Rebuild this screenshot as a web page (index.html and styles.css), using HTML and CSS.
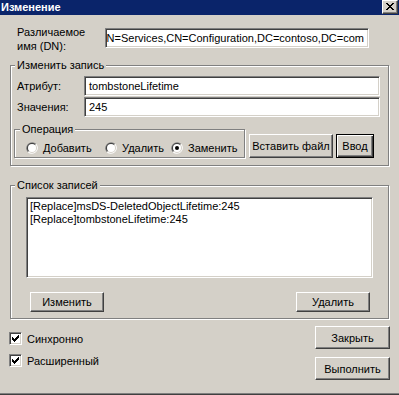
FILE: index.html
```html
<!DOCTYPE html>
<html lang="ru">
<head>
<meta charset="utf-8">
<title>Изменение</title>
<link rel="stylesheet" href="styles.css">
</head>
<body>
<div class="window">
  <div class="titlebar">
    <span class="title-text">Изменение</span>
    <span class="close-btn">
      <svg width="8" height="7" viewBox="0 0 8 7" shape-rendering="crispEdges"><path fill="#000" d="M0 0h2v1h-2z M6 0h2v1h-2z M1 1h2v1h-2z M5 1h2v1h-2z M2 2h4v1h-4z M3 3h2v1h-2z M2 4h4v1h-4z M1 5h2v1h-2z M5 5h2v1h-2z M0 6h2v1h-2z M6 6h2v1h-2z"/></svg>
    </span>
  </div>

  <div class="dn-row">
    <div class="dn-label">Различаемое<br>имя (DN):</div>
    <div class="edit dn-edit"><span class="nowrap">N=Services,CN=Configuration,DC=contoso,DC=com</span></div>
  </div>

  <div class="group group-edit">
    <span class="legend">Изменить запись</span>
    <div class="field-row">
      <span class="field-label">Атрибут:</span>
      <div class="edit field-edit">tombstoneLifetime</div>
    </div>
    <div class="field-row field-row-2">
      <span class="field-label">Значения:</span>
      <div class="edit field-edit">245</div>
    </div>
    <div class="op-row">
      <div class="group op-group">
        <span class="legend legend-op">Операция</span>
        <div class="radios">
          <span class="radio r1"><svg class="radio-icon" width="12" height="12" viewBox="0 0 12 12"><path fill="#808080" d="M10.24 1.76A6 6 0 0 0 1.76 10.24Z"/><path fill="#fff" d="M10.24 1.76A6 6 0 0 1 1.76 10.24Z"/><path fill="#404040" d="M9.54 2.46A5 5 0 0 0 2.46 9.54Z"/><path fill="#d4d0c8" d="M9.54 2.46A5 5 0 0 1 2.46 9.54Z"/><circle cx="6" cy="6" r="4" fill="#fff"/></svg>Добавить</span>
          <span class="radio r2"><svg class="radio-icon" width="12" height="12" viewBox="0 0 12 12"><path fill="#808080" d="M10.24 1.76A6 6 0 0 0 1.76 10.24Z"/><path fill="#fff" d="M10.24 1.76A6 6 0 0 1 1.76 10.24Z"/><path fill="#404040" d="M9.54 2.46A5 5 0 0 0 2.46 9.54Z"/><path fill="#d4d0c8" d="M9.54 2.46A5 5 0 0 1 2.46 9.54Z"/><circle cx="6" cy="6" r="4" fill="#fff"/></svg>Удалить</span>
          <span class="radio r3"><svg class="radio-icon" width="12" height="12" viewBox="0 0 12 12"><path fill="#808080" d="M10.24 1.76A6 6 0 0 0 1.76 10.24Z"/><path fill="#fff" d="M10.24 1.76A6 6 0 0 1 1.76 10.24Z"/><path fill="#404040" d="M9.54 2.46A5 5 0 0 0 2.46 9.54Z"/><path fill="#d4d0c8" d="M9.54 2.46A5 5 0 0 1 2.46 9.54Z"/><circle cx="6" cy="6" r="4" fill="#fff"/><circle cx="6" cy="6" r="2" fill="#000"/></svg>Заменить</span>
        </div>
      </div>
      <span class="btn btn-insert">Вставить файл</span>
      <span class="btn btn-default btn-enter">Ввод</span>
    </div>
  </div>

  <div class="group group-list">
    <span class="legend">Список записей</span>
    <div class="listbox">
      <div class="list-item">[Replace]msDS-DeletedObjectLifetime:245</div>
      <div class="list-item">[Replace]tombstoneLifetime:245</div>
    </div>
    <div class="list-buttons">
      <span class="btn btn-small">Изменить</span>
      <span class="btn btn-small">Удалить</span>
    </div>
  </div>

  <div class="bottom">
    <div class="checks">
      <div class="check-row">
        <span class="checkbox"><svg width="11" height="11" viewBox="0 0 11 11" shape-rendering="crispEdges"><path fill="#000" d="M8 2h1v1h-1z M7 3h2v1h-2z M2 4h1v1h-1z M6 4h3v1h-3z M2 5h2v1h-2z M5 5h3v1h-3z M2 6h5v1h-5z M3 7h3v1h-3z M4 8h1v1h-1z"/></svg></span>
        <span>Синхронно</span>
      </div>
      <div class="check-row check-row-2">
        <span class="checkbox"><svg width="11" height="11" viewBox="0 0 11 11" shape-rendering="crispEdges"><path fill="#000" d="M8 2h1v1h-1z M7 3h2v1h-2z M2 4h1v1h-1z M6 4h3v1h-3z M2 5h2v1h-2z M5 5h3v1h-3z M2 6h5v1h-5z M3 7h3v1h-3z M4 8h1v1h-1z"/></svg></span>
        <span>Расширенный</span>
      </div>
    </div>
    <div class="actions">
      <span class="btn btn-action">Закрыть</span>
      <span class="btn btn-action btn-run">Выполнить</span>
    </div>
  </div>
</div>
</body>
</html>
```
FILE: styles.css
```css
html {
  background: #404040;
}
body {
  margin: 0;
  font: 11px "Liberation Sans", Arial, sans-serif;
  color: #000;
}
.window {
  width: 399px;
  height: 394px;
  box-sizing: border-box;
  background: #d4d0c8;
  border-bottom: 1px solid #808080;
  overflow: hidden;
}
.titlebar {
  height: 15px;
  background: #0a246a;
  display: flex;
  justify-content: space-between;
  align-items: flex-start;
}
.title-text {
  color: #fff;
  font-weight: bold;
  line-height: 15px;
  padding-left: 1px;
}
.close-btn {
  width: 16px;
  height: 14px;
  margin-right: 1px;
  box-sizing: border-box;
  background: #d4d0c8;
  border: 1px solid;
  border-color: #fff #404040 #404040 #fff;
  box-shadow: inset -1px -1px #808080;
  display: flex;
  padding: 2px 0 0 3px;
}
.close-btn svg {
  display: block;
}

/* edits */
.edit {
  height: 20px;
  box-sizing: border-box;
  background: #fff;
  border: 1px solid;
  border-color: #808080 #fff #fff #808080;
  box-shadow: inset 1px 1px #404040, inset -1px -1px #d4d0c8;
  display: flex;
  align-items: center;
  padding: 0 3px;
  white-space: nowrap;
  overflow: hidden;
}

.dn-row {
  display: flex;
  margin-top: 10px;
  padding-left: 17px;
}
.dn-label {
  width: 88px;
  line-height: 14px;
}
.dn-edit {
  width: 264px;
  margin-top: 3px;
  padding: 0 4px 0 1px;
  justify-content: flex-end;
}
.nowrap {
  white-space: nowrap;
  flex-shrink: 0;
}

/* group boxes */
.group {
  position: relative;
  box-sizing: border-box;
  border: 1px solid #808080;
  box-shadow: inset 1px 1px #fff, 1px 1px #fff;
}
.legend {
  position: absolute;
  top: -8px;
  left: 4px;
  padding: 0 2px;
  background: #d4d0c8;
  line-height: 14px;
  white-space: nowrap;
}
.group-edit {
  margin: 12px 0 0 10px;
  width: 379px;
  padding: 10px 0 7px 0;
}
.field-row {
  display: flex;
  align-items: center;
  padding-left: 6px;
}
.field-row-2 {
  margin-top: 1px;
}
.field-label {
  width: 67px;
}
.field-edit {
  width: 296px;
  padding-left: 4px;
}
.op-row {
  display: flex;
  align-items: flex-end;
  margin: 12px 0 0 3px;
}
.op-group {
  width: 231px;
  height: 29px;
  padding: 12px 0 0 11px;
}
.legend-op {
  left: 5px;
}
.radios {
  display: flex;
  align-items: center;
  height: 12px;
}
.radio {
  display: flex;
  align-items: center;
  gap: 5px;
  white-space: nowrap;
}
.radio-icon {
  display: block;
  flex-shrink: 0;
}
.r1 { width: 79px; }
.r2 { width: 66px; }

/* buttons */
.btn {
  box-sizing: border-box;
  display: flex;
  align-items: center;
  justify-content: center;
  background: #d4d0c8;
  border: 1px solid;
  border-color: #fff #404040 #404040 #fff;
  box-shadow: inset -1px -1px #808080;
  white-space: nowrap;
}
.btn-insert {
  width: 84px;
  height: 24px;
  margin-left: 4px;
}
.btn-default {
  border: 1px solid #000;
  box-shadow: inset 1px 1px #fff, inset -1px -1px #404040, inset -2px -2px #808080;
}
.btn-enter {
  width: 38px;
  height: 24px;
  margin-left: 3px;
}

/* list */
.group-list {
  margin: 19px 0 0 10px;
  width: 379px;
  padding: 11px 0 6px 0;
}
.listbox {
  width: 347px;
  height: 81px;
  margin-left: 15px;
  box-sizing: border-box;
  background: #fff;
  border: 1px solid;
  border-color: #808080 #fff #fff #808080;
  box-shadow: inset 1px 1px #404040, inset -1px -1px #d4d0c8;
  padding: 2px 0 0 3px;
}
.list-item {
  line-height: 13px;
  white-space: nowrap;
}
.list-buttons {
  display: flex;
  justify-content: space-between;
  margin: 14px 18px 0 19px;
}
.btn-small {
  width: 74px;
  height: 20px;
}

/* bottom */
.bottom {
  display: flex;
  justify-content: space-between;
  margin-top: 1px;
  padding: 0 9px;
}
.checks {
  padding-top: 12px;
}
.check-row {
  display: flex;
  align-items: center;
  gap: 5px;
  height: 13px;
}
.check-row-2 {
  margin-top: 9px;
}
.checkbox {
  width: 13px;
  height: 13px;
  box-sizing: border-box;
  background: #fff;
  border: 1px solid;
  border-color: #808080 #fff #fff #808080;
  box-shadow: inset 1px 1px #404040, inset -1px -1px #d4d0c8;
}
.checkbox svg {
  display: block;
}
.actions {
  padding-top: 6px;
}
.btn-action {
  width: 75px;
  height: 23px;
}
.btn-run {
  margin-top: 8px;
}
```
